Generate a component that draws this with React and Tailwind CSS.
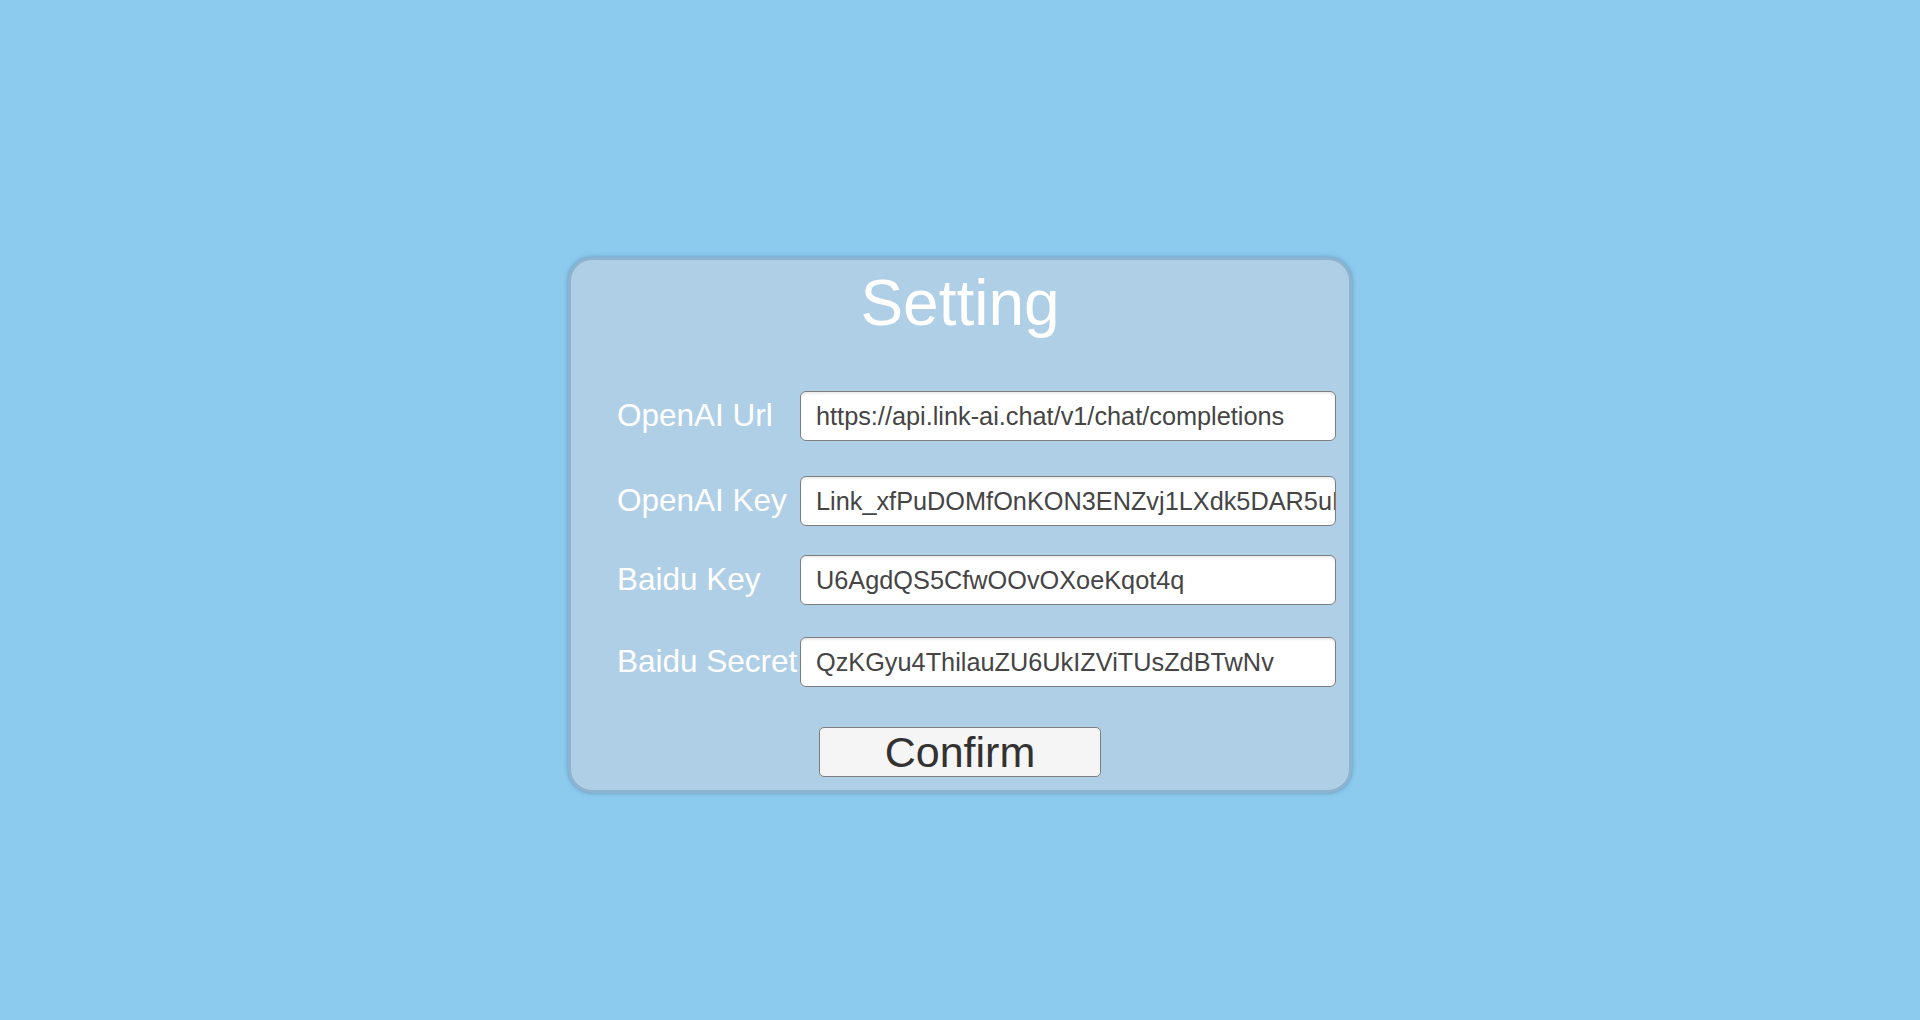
import React from "react";

const fields = [
  { label: "OpenAI Url", value: "https://api.link-ai.chat/v1/chat/completions", gap: "mt-[56px]" },
  { label: "OpenAI Key", value: "Link_xfPuDOMfOnKON3ENZvj1LXdk5DAR5uNqF2bR0y", gap: "mt-[35px]" },
  { label: "Baidu Key", value: "U6AgdQS5CfwOOvOXoeKqot4q", gap: "mt-[29px]" },
  { label: "Baidu Secret", value: "QzKGyu4ThilauZU6UkIZViTUsZdBTwNv", gap: "mt-[32px]" },
];

const App = () => {
  return (
    <div
      className="min-h-screen w-full bg-[#8ccbee] flex items-center justify-center pt-[30px]"
      style={{ fontFamily: '"Liberation Sans", Arial, sans-serif' }}
    >
      <div className="w-[784px] bg-[#afcfe6] border-[3px] border-[#8cb3cf] rounded-[24px] shadow-[0_0_4px_rgba(60,100,130,0.5)] pt-[11px] pb-[13px] pl-[46px] pr-[13px] flex flex-col">
        <h1 className="text-[64px] leading-none text-white text-center -ml-[33px]">Setting</h1>

        {fields.map((f) => (
          <div key={f.label} className={`${f.gap} flex items-center h-[50px]`}>
            <div className="w-[183px] shrink-0 whitespace-nowrap text-[31.5px] text-white">{f.label}</div>
            <input
              readOnly
              defaultValue={f.value}
              className="flex-1 h-[50px] min-w-0 bg-white border border-[#7d7d7d] rounded-[6px] pl-[15px] pr-0 text-[25.3px] text-[#454545] outline-none shadow-[inset_0_2px_2px_rgba(0,0,0,0.08)]"
              style={{ fontFamily: '"Liberation Sans", Arial, sans-serif' }}
            />
          </div>
        ))}

        <div className="mt-[40px] flex justify-center -ml-[33px]">
          <button className="w-[282px] h-[50px] bg-[#f5f5f5] border border-[#7d7d7d] rounded-[5px] text-[43px] leading-none text-[#323232] cursor-pointer">
            Confirm
          </button>
        </div>
      </div>
    </div>
  );
};

export default App;
